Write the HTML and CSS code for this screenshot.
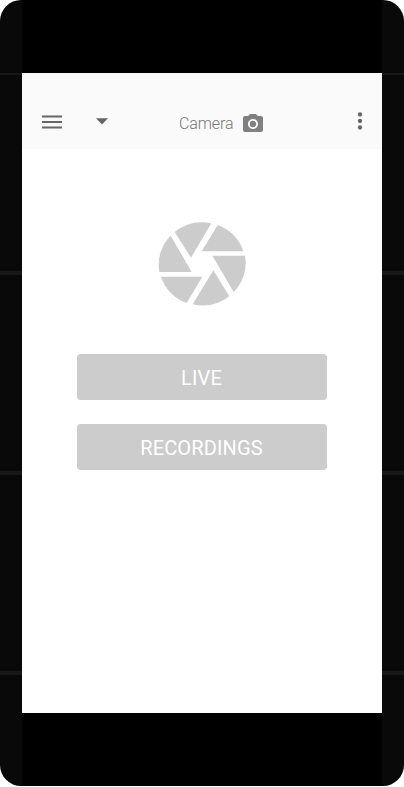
FILE: index.html
```html
<!DOCTYPE html>
<html lang="en">
<head>
<meta charset="utf-8">
<title>Camera</title>
<link rel="stylesheet" href="styles.css">
</head>
<body>
<div class="device">
  <div class="column">
    <div class="screen">
      <header class="bar">
        <svg class="menu" viewBox="0 0 20 14"><path d="M0 .5h20v1.900H0zM0 6h20v2H0zM0 11.500h20v1.900H0z"/></svg>
        <svg class="arrow" viewBox="0 0 12 7"><path d="M0 .3h12L6 6.5z"/></svg>
        <h1 class="title">Camera</h1>
        <svg class="camera" viewBox="2 2 20 18"><circle cx="12" cy="12" r="3.2"/><path d="M9 2L7.170 4H4c-1.100 0-2 .9-2 2v12c0 1.100.9 2 2 2h16c1.100 0 2-.9 2-2V6c0-1.100-.9-2-2-2h-3.170L15 2H9zm3 15c-2.760 0-5-2.240-5-5s2.240-5 5-5 5 2.240 5 5-2.240 5-5 5z"/></svg>
        <svg class="more" viewBox="0 0 4 18"><circle cx="2" cy="2.500" r="2.150"/><circle cx="2" cy="9" r="2.150"/><circle cx="2" cy="15.500" r="2.150"/></svg>
      </header>
      <main class="content">
        <svg class="aperture" viewBox="48 33 264 258">
          <path d="M98 66A130 126 0 0 1 208 40L147 143Z"/>
          <path d="M227 45A130 126 0 0 1 304 124H179Z"/>
          <path d="M309 137A130 126 0 0 1 275 246L211 137Z"/>
          <path d="M262 259A130 126 0 0 1 152 283L214 181Z"/>
          <path d="M134 279A130 126 0 0 1 57 200H181Z"/>
          <path d="M52 186A130 126 0 0 1 86 77L149 186Z"/>
        </svg>
        <button class="action">LIVE</button>
        <button class="action">RECORDINGS</button>
      </main>
    </div>
  </div>
</div>
</body>
</html>
```
FILE: styles.css
```css
body {
  margin: 0;
  background: #fff;
  font-family: Roboto, "Liberation Sans", sans-serif;
}
.device {
  box-sizing: border-box;
  width: 404px;
  height: 786px;
  padding: 0 22px;
  border-radius: 21px;
  overflow: hidden;
  background:
    linear-gradient(#171717, #171717) 0 73px / 100% 2px no-repeat,
    linear-gradient(#171717, #171717) 0 271px / 100% 4px no-repeat,
    linear-gradient(#171717, #171717) 0 471px / 100% 4px no-repeat,
    linear-gradient(#171717, #171717) 0 671px / 100% 4px no-repeat,
    #090909;
}
.column {
  box-sizing: border-box;
  height: 786px;
  padding: 73px 0;
  background: #000;
}
.screen {
  height: 640px;
  background: #fff;
}
.bar {
  box-sizing: border-box;
  display: flex;
  align-items: center;
  height: 76px;
  padding: 22px 20px 0;
  background: #fafafa;
}
.bar svg {
  display: block;
  flex: none;
  fill: #666;
}
.menu {
  width: 20px;
  height: 14px;
  margin-right: 34px;
}
.arrow {
  width: 12px;
  height: 7px;
  margin-bottom: 1px;
}
.title {
  width: 55px;
  margin: 3px 9px 0 71px;
  font-size: 16px;
  line-height: 20px;
  font-weight: 300;
  letter-spacing: -0.1px;
  color: #777;
  white-space: nowrap;
}
.bar .camera {
  width: 20px;
  height: 18px;
  margin-top: 2px;
  fill: #808080;
}
.more {
  width: 4px;
  height: 18px;
  margin: 0 0 2px auto;
  overflow: visible;
}
.content {
  display: flex;
  flex-direction: column;
  align-items: center;
  padding-top: 72px;
}
.aperture {
  width: 88px;
  height: 86px;
  margin-bottom: 47px;
  fill: #ccc;
}
.action {
  width: 250px;
  height: 46px;
  margin: 0 0 24px;
  padding: 2px 1px 0 0;
  border: 0;
  border-radius: 4px;
  background: #ccc;
  color: #fff;
  font: 400 20px/24px Roboto, "Liberation Sans", sans-serif;
  letter-spacing: 0.15px;
}
```
